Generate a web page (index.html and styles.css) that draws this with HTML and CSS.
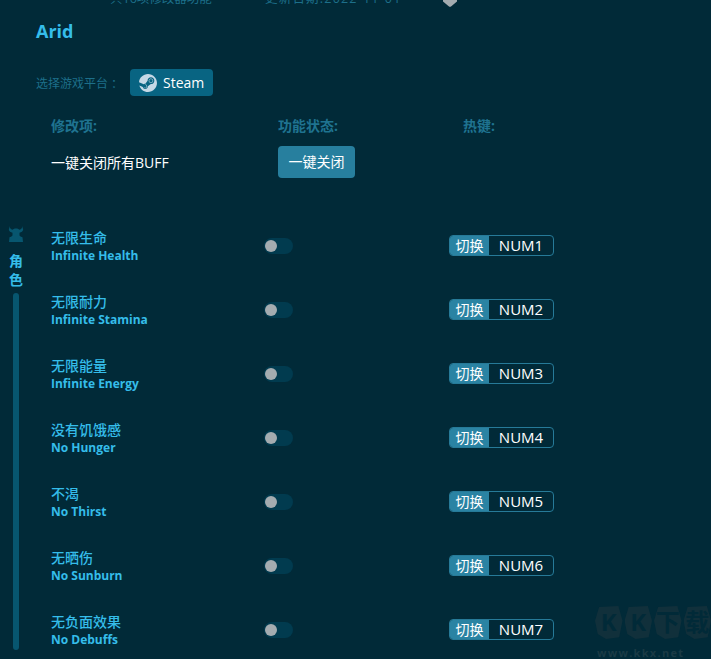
FILE: index.html

```html
<!DOCTYPE html>
<html lang="zh-CN">
<head>
    <meta charset="UTF-8">
    <title>Arid</title>
    <link rel="stylesheet" href="styles.css">
</head>

<body>
    <div class="top-info">
        <span class="count">共16项修改器功能</span>
        <span class="date">更新日期:2022-11-01</span>
        <svg class="fav" width="14" height="14" viewBox="0 0 14 14"><path d="M0 0h14v1.500L8.300 6.300q-1.300 1-2.600 0L0 1.500z"/></svg>
    </div>
    <h1 class="game-name">Arid</h1>
    <div class="platform">
        <span class="platform-label">选择游戏平台 ：</span>
        <div class="platform-btn">
            <svg width="18" height="18" viewBox="0 0 24 24"><path fill="#c5d8e6" d="M11.979 0C5.678 0 .511 4.86.022 11.037l6.432 2.658c.545-.371 1.203-.59 1.912-.59.063 0 .125.004.188.006l2.861-4.142V8.91c0-2.495 2.028-4.524 4.524-4.524 2.494 0 4.524 2.031 4.524 4.527s-2.03 4.525-4.524 4.525h-.105l-4.076 2.911c0 .052.004.105.004.159 0 1.875-1.515 3.396-3.39 3.396-1.635 0-3.016-1.173-3.331-2.727L.436 15.27C1.862 20.307 6.486 24 11.979 24c6.627 0 11.999-5.373 11.999-12S18.605 0 11.979 0zM7.54 18.21l-1.473-.61c.262.543.714.999 1.314 1.25 1.297.539 2.793-.076 3.332-1.375.263-.63.264-1.319.005-1.949s-.75-1.121-1.377-1.383c-.624-.26-1.29-.249-1.878-.03l1.523.63c.956.4 1.409 1.5 1.009 2.455-.397.957-1.497 1.41-2.454 1.012H7.54zm11.415-9.303c0-1.662-1.353-3.015-3.015-3.015-1.665 0-3.015 1.353-3.015 3.015 0 1.665 1.35 3.015 3.015 3.015 1.663 0 3.015-1.35 3.015-3.015zm-5.273-.005c0-1.252 1.013-2.266 2.265-2.266 1.249 0 2.266 1.014 2.266 2.266 0 1.251-1.017 2.265-2.266 2.265-1.253 0-2.265-1.014-2.265-2.265z"/></svg>
            <span>Steam</span>
        </div>
    </div>

    <div class="table-head">
        <span>修改项:</span>
        <span>功能状态:</span>
        <span class="head-key">热键:</span>
    </div>
    <div class="close-all">
        <span>一键关闭所有BUFF</span>
        <div class="close-btn">一键关闭</div>
    </div>

    <div class="cheats">
        <div class="side">
            <svg class="side-icon" width="16" height="16" viewBox="0 0 16 16"><path d="M2 0c-.3 2 .6 3.400 2.600 3.800C5.400 2.800 6.600 2.400 8 2.400s2.600.4 3.400 1.400C13.400 3.400 14.300 2 14 0l1.200 3.500c-.3 1.800-1.800 3-3.700 3.200V9c0 1.200.8 1.500 3 2.200L15 16H1l.5-4.800C3.700 10.500 4.500 10.200 4.500 9V6.700C2.600 6.500 1.100 5.300.8 3.500z"/></svg>
            <div class="side-name">角</div>
            <div class="side-name">色</div>
            <div class="side-bar"></div>
        </div>
        <div class="list">
            <div class="row">
                <div class="names"><div class="cn">无限生命</div><div class="en">Infinite Health</div></div>
                <div class="toggle"><i></i></div>
                <div class="hotkey"><span class="hk-label">切换</span><span class="hk-key">NUM1</span></div>
            </div>
            <div class="row">
                <div class="names"><div class="cn">无限耐力</div><div class="en">Infinite Stamina</div></div>
                <div class="toggle"><i></i></div>
                <div class="hotkey"><span class="hk-label">切换</span><span class="hk-key">NUM2</span></div>
            </div>
            <div class="row">
                <div class="names"><div class="cn">无限能量</div><div class="en">Infinite Energy</div></div>
                <div class="toggle"><i></i></div>
                <div class="hotkey"><span class="hk-label">切换</span><span class="hk-key">NUM3</span></div>
            </div>
            <div class="row">
                <div class="names"><div class="cn">没有饥饿感</div><div class="en">No Hunger</div></div>
                <div class="toggle"><i></i></div>
                <div class="hotkey"><span class="hk-label">切换</span><span class="hk-key">NUM4</span></div>
            </div>
            <div class="row">
                <div class="names"><div class="cn">不渴</div><div class="en">No Thirst</div></div>
                <div class="toggle"><i></i></div>
                <div class="hotkey"><span class="hk-label">切换</span><span class="hk-key">NUM5</span></div>
            </div>
            <div class="row">
                <div class="names"><div class="cn">无晒伤</div><div class="en">No Sunburn</div></div>
                <div class="toggle"><i></i></div>
                <div class="hotkey"><span class="hk-label">切换</span><span class="hk-key">NUM6</span></div>
            </div>
            <div class="row">
                <div class="names"><div class="cn">无负面效果</div><div class="en">No Debuffs</div></div>
                <div class="toggle"><i></i></div>
                <div class="hotkey"><span class="hk-label">切换</span><span class="hk-key">NUM7</span></div>
            </div>
        </div>
    </div>

    <!-- 水印 -->
    <div class="watermark">
        <div class="wm-logo"><span>K</span><span>K</span><span>下</span><span>载</span></div>
        <div class="wm-url">www.kkx.net</div>
    </div>
</body>
</html>
```

FILE: styles.css

```css
html,body {
    margin: 0;
    padding: 0;
    height: 659px;
    overflow: hidden;
}
body {
    position: relative;
    background: #012a38;
    font-family: "Open Sans", "Noto Sans CJK SC", sans-serif;
    color: #fff;
}
.top-info {
    display: flex;
    align-items: flex-end;
    height: 7px;
    padding-left: 110px;
    font-size: 12.5px;
    line-height: 16px;
    color: #1d6f8a;
}
.top-info .count { width: 155px; }
.top-info .date { width: 178px; letter-spacing: 1.2px; }
.top-info .fav { fill: #a4acb0; margin-bottom: -7px; }
.game-name {
    margin: 11px 0 0 36px;
    font-size: 18px;
    line-height: 26px;
    font-weight: 700;
    color: #35bdea;
}
.platform {
    display: flex;
    align-items: center;
    margin: 25px 0 0 36px;
}
.platform-label {
    width: 94px;
    font-size: 12px;
    color: #1d6f8a;
}
.platform-btn {
    display: flex;
    align-items: center;
    gap: 6px;
    width: 83px;
    height: 27px;
    padding-left: 9px;
    box-sizing: border-box;
    border-radius: 4px;
    background: #086482;
    font-size: 14px;
}
.table-head {
    display: flex;
    margin: 21px 0 0 51px;
    font-size: 14px;
    line-height: 18px;
    font-weight: 700;
    color: #1f7390;
}
.table-head span { width: 227px; }
.table-head span + span { width: 185px; }
.close-all {
    display: flex;
    align-items: center;
    margin: 11px 0 0 51px;
    font-size: 14px;
}
.close-all span { width: 227px; }
.close-btn {
    width: 77px;
    height: 32px;
    line-height: 32px;
    text-align: center;
    border-radius: 4px;
    background: #277f9e;
}
.cheats {
    display: flex;
    margin-top: 35px;
}
.side {
    display: flex;
    flex-direction: column;
    align-items: center;
    width: 32px;
    margin-right: 19px;
    padding-top: 13px;
    box-sizing: border-box;
}
.side-icon { fill: #07566f; margin-bottom: 9px; }
.side-name {
    font-size: 14px;
    line-height: 19px;
    font-weight: 700;
    color: #35bdea;
}
.side-bar {
    flex: none;
    width: 6px;
    height: 357px;
    margin-top: 4px;
    border-radius: 3px;
    background: #07566f;
}
.row {
    display: flex;
    align-items: center;
    height: 64px;
}
.names { width: 213px; padding-top: 2px; }
.cn {
    font-size: 14px;
    line-height: 19px;
    font-weight: 500;
    color: #35bdea;
}
.en {
    font-size: 12px;
    line-height: 17px;
    font-weight: 700;
    color: #35bdea;
}
.toggle {
    width: 29px;
    height: 16px;
    margin: 2px 156px 0 0;
    border-radius: 8px;
    background: #013b4f;
    display: flex;
    align-items: center;
    padding-left: 1px;
    box-sizing: border-box;
}
.toggle i {
    display: block;
    width: 12px;
    height: 12px;
    border-radius: 50%;
    background: #a4acb0;
}
.hotkey {
    display: flex;
    width: 105px;
    height: 21px;
    box-sizing: border-box;
    border: 1px solid #267a98;
    border-radius: 4px;
    overflow: hidden;
}
.hk-label {
    width: 39px;
    background: #2a83a3;
    font-size: 14px;
    line-height: 19px;
    text-align: center;
}
.hk-key {
    flex: 1;
    font-size: 15px;
    line-height: 19px;
    text-align: center;
    color: #fff;
}
.watermark {
    position: absolute;
    left: 595px;
    top: 606px;
    width: 116px;
}
.wm-logo {
    display: flex;
    gap: 2px;
}
.wm-logo span {
    width: 27.500px;
    height: 33px;
    line-height: 32px;
    text-align: center;
    font-size: 24px;
    font-weight: 700;
    background: #11303b;
    color: #012a38;
    clip-path: polygon(15% 3%, 85% 0, 100% 45%, 88% 95%, 40% 100%, 10% 85%, 0 45%);
}
.wm-url {
    margin-top: 8px;
    margin-left: 2px;
    font-size: 11px;
    line-height: 11px;
    font-weight: 700;
    letter-spacing: 1.3px;
    color: #1a3a45;
}
```
